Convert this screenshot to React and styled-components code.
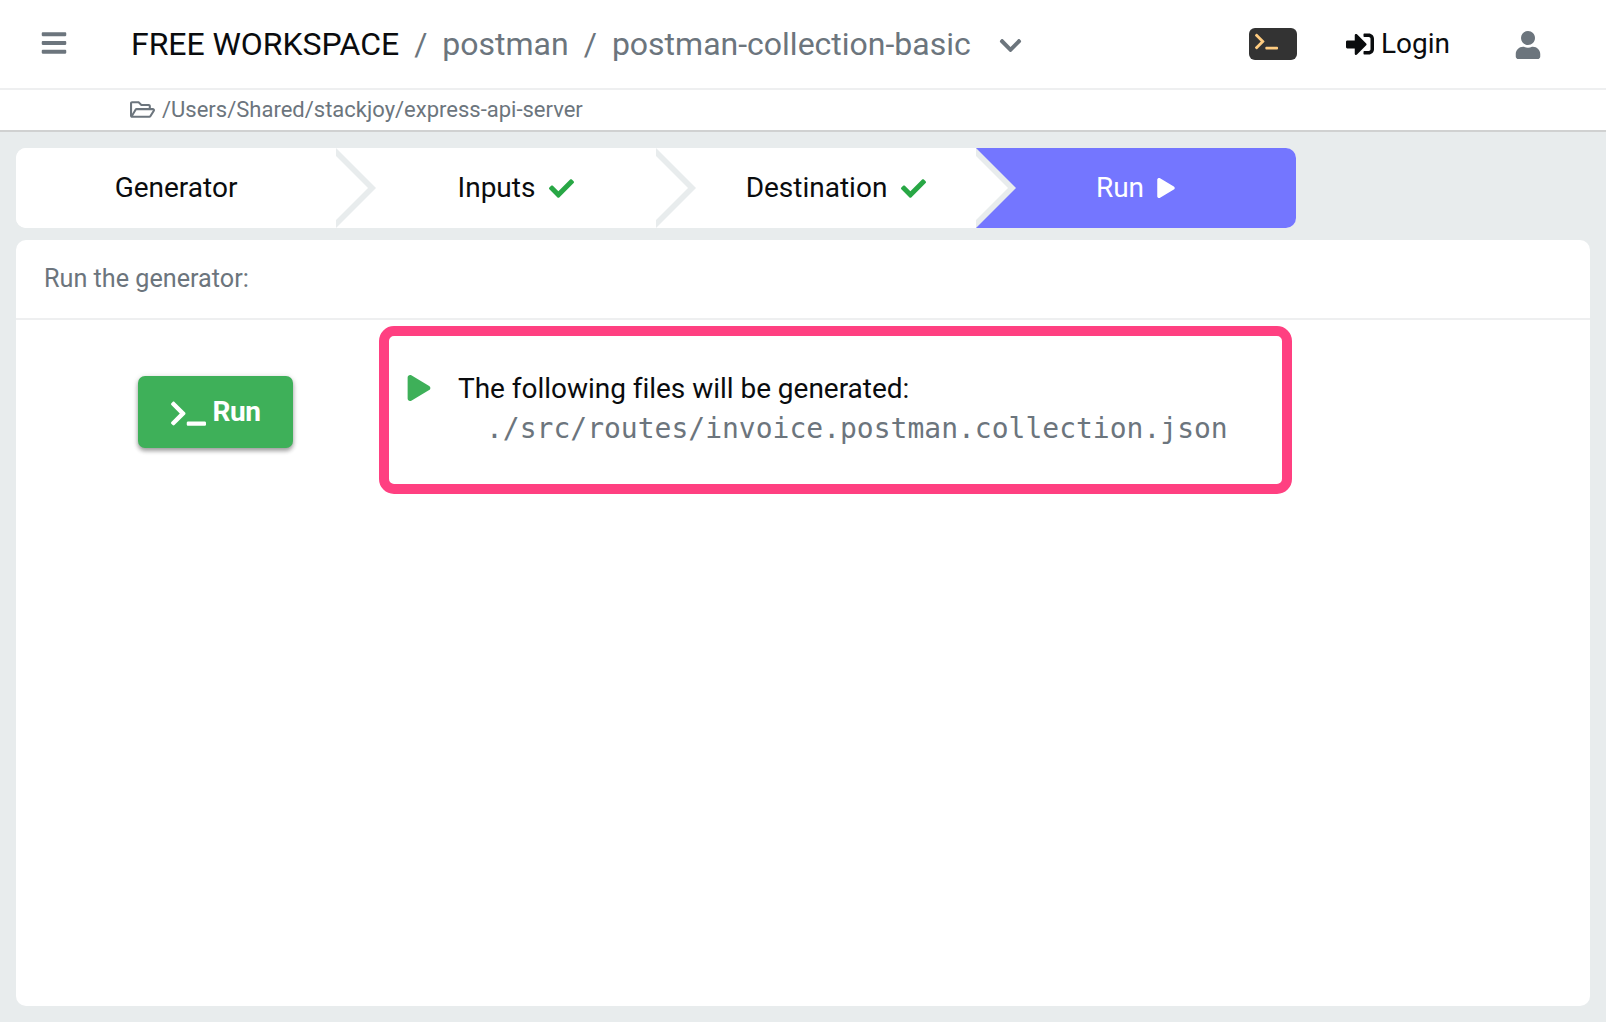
import React from "react";
import styled, { createGlobalStyle } from "styled-components";
import {
  FaBars,
  FaCheck,
  FaChevronDown,
  FaPlay,
  FaRegFolderOpen,
  FaSignInAlt,
  FaTerminal,
  FaUser,
} from "react-icons/fa";

const GlobalStyle = createGlobalStyle`
  * { box-sizing: border-box; }
  body {
    margin: 0;
    background: #e8eced;
    font-family: Roboto, "Liberation Sans", sans-serif;
    color: #0a0c0e;
  }
  svg { display: block; flex: none; }
`;

const Page = styled.div`
  height: 1022px;
  display: flex;
  flex-direction: column;
  overflow: hidden;
`;

const Header = styled.header`
  height: 90px;
  padding: 0 64px 0 40px;
  display: flex;
  align-items: center;
  background: #fff;
  border-bottom: 2px solid #eeeff0;
`;

const MenuButton = styled.div`
  width: 91px;
  margin-top: -3px;
  color: #6c757d;
`;

const Breadcrumb = styled.nav`
  flex: 1;
  display: flex;
  align-items: center;
  font-size: 32px;
  line-height: 44px;
  color: #6c757d;
  white-space: pre;
`;

const Crumb = styled.span`
  color: ${(p) => (p.$strong ? "#0a0c0e" : "#6c757d")};
  letter-spacing: ${(p) => (p.$strong ? "-0.04px" : "0")};
`;

const Slash = styled.span`
  padding: 0 15px;
`;

const CrumbToggle = styled.span`
  padding: 2px 0 0 27px;
`;

const TerminalBadge = styled.div`
  width: 48px;
  height: 32px;
  padding: 2px 0 0 6px;
  border-radius: 6px;
  background: #333;
  color: #ffcc80;
`;

const Login = styled.div`
  display: flex;
  align-items: center;
  gap: 7px;
  margin-left: 49px;
  font-size: 28px;
  line-height: 40px;
`;

const Profile = styled.div`
  margin: 2px 0 0 64px;
  color: #6c757d;
`;

const PathBar = styled.div`
  height: 42px;
  padding: 0 0 2px 130px;
  display: flex;
  align-items: center;
  gap: 7px;
  background: #fff;
  border-bottom: 2px solid #d0d1d1;
  color: #6c757d;
  font-size: 22px;
`;

const Main = styled.main`
  flex: 1;
  padding: 16px;
  display: flex;
  flex-direction: column;
  gap: 12px;
`;

const Steps = styled.div`
  display: flex;
  width: 1280px;
  height: 80px;
  border-radius: 10px;
  background: #fff;
  overflow: hidden;
`;

const Step = styled.div`
  position: relative;
  width: 320px;
  display: flex;
  align-items: center;
  justify-content: center;
  gap: ${(p) => (p.$active ? "12px" : "14px")};
  font-size: 28px;
  line-height: 40px;
  padding-left: ${(p) => (p.$done ? "40px" : "0")};
  background: ${(p) => (p.$active ? "#7476ff" : "#fff")};
  color: ${(p) => (p.$active ? "#fff" : "#0a0c0e")};
`;

const StepArrow = styled.svg`
  position: absolute;
  left: 0;
  top: 0;
`;

const Green = styled.span`
  color: #28a745;
`;

const Card = styled.section`
  flex: 1;
  border-radius: 10px;
  background: #fff;
`;

const CardHeader = styled.div`
  height: 80px;
  padding: 0 28px 2px;
  display: flex;
  align-items: center;
  border-bottom: 2px solid #eeeff0;
  color: #6c757d;
  font-size: 25.2px;
`;

const CardBody = styled.div`
  display: flex;
  align-items: flex-start;
  padding: 6px 0 0 122px;
`;

const RunButton = styled.button`
  width: 155px;
  height: 72px;
  margin: 50px 86px 0 0;
  padding: 0;
  display: flex;
  align-items: center;
  justify-content: center;
  gap: 7px;
  border: 0;
  border-radius: 7px;
  background: #3eb059;
  color: #fff;
  font: 700 28px/40px Roboto, "Liberation Sans", sans-serif;
  letter-spacing: -0.45px;
  box-shadow: 0 3px 4px rgba(0, 0, 0, 0.32), 0 1px 6px rgba(0, 0, 0, 0.14);

  svg { margin-top: 3px; }
`;

const FilesBox = styled.div`
  width: 913px;
  height: 168px;
  border: 10px solid #ff4081;
  border-radius: 15px;
  padding: 33px 0 0 17px;
  display: flex;
  align-items: flex-start;
`;

const FilesMarker = styled.div`
  width: 52px;
  padding-top: 6px;
  color: #3eb059;
`;

const FilesTitle = styled.div`
  font-size: 28px;
  line-height: 40px;
  letter-spacing: -0.03px;
`;

const FilePath = styled.div`
  padding-left: 28px;
  font: 28px/40px "DejaVu Sans Mono", "Liberation Mono", monospace;
  color: #6c757d;
  white-space: nowrap;
`;

const STEPS = [
  { label: "Generator" },
  { label: "Inputs", done: true },
  { label: "Destination", done: true },
  { label: "Run", active: true },
];

function Arrow() {
  return (
    <StepArrow width="40" height="80" viewBox="0 0 40 80">
      <path d="M0 0L40 40L0 80Z" fill="#e8eced" />
      <path d="M0 8L32 40L0 72Z" fill="#fff" />
    </StepArrow>
  );
}

export default function App() {
  return (
    <Page>
      <GlobalStyle />
      <Header>
        <MenuButton><FaBars size={28} /></MenuButton>
        <Breadcrumb>
          <Crumb $strong>FREE WORKSPACE</Crumb>
          <Slash>/</Slash>
          <Crumb>postman</Crumb>
          <Slash>/</Slash>
          <Crumb>postman-collection-basic</Crumb>
          <CrumbToggle><FaChevronDown size={25} /></CrumbToggle>
        </Breadcrumb>
        <TerminalBadge><FaTerminal size={23} /></TerminalBadge>
        <Login>
          <FaSignInAlt size={28} />
          <span>Login</span>
        </Login>
        <Profile><FaUser size={28} /></Profile>
      </Header>
      <PathBar>
        <FaRegFolderOpen size={25} />
        <span>/Users/Shared/stackjoy/express-api-server</span>
      </PathBar>
      <Main>
        <Steps>
          {STEPS.map((step, i) => (
            <Step key={step.label} $active={step.active} $done={step.done}>
              {i > 0 && <Arrow />}
              <span>{step.label}</span>
              {step.done && <Green><FaCheck size={25} /></Green>}
              {step.active && <FaPlay size={20} />}
            </Step>
          ))}
        </Steps>
        <Card>
          <CardHeader>Run the generator:</CardHeader>
          <CardBody>
            <RunButton>
              <FaTerminal size={35} />
              <span>Run</span>
            </RunButton>
            <FilesBox>
              <FilesMarker><FaPlay size={26} /></FilesMarker>
              <div>
                <FilesTitle>The following files will be generated:</FilesTitle>
                <FilePath>./src/routes/invoice.postman.collection.json</FilePath>
              </div>
            </FilesBox>
          </CardBody>
        </Card>
      </Main>
    </Page>
  );
}
